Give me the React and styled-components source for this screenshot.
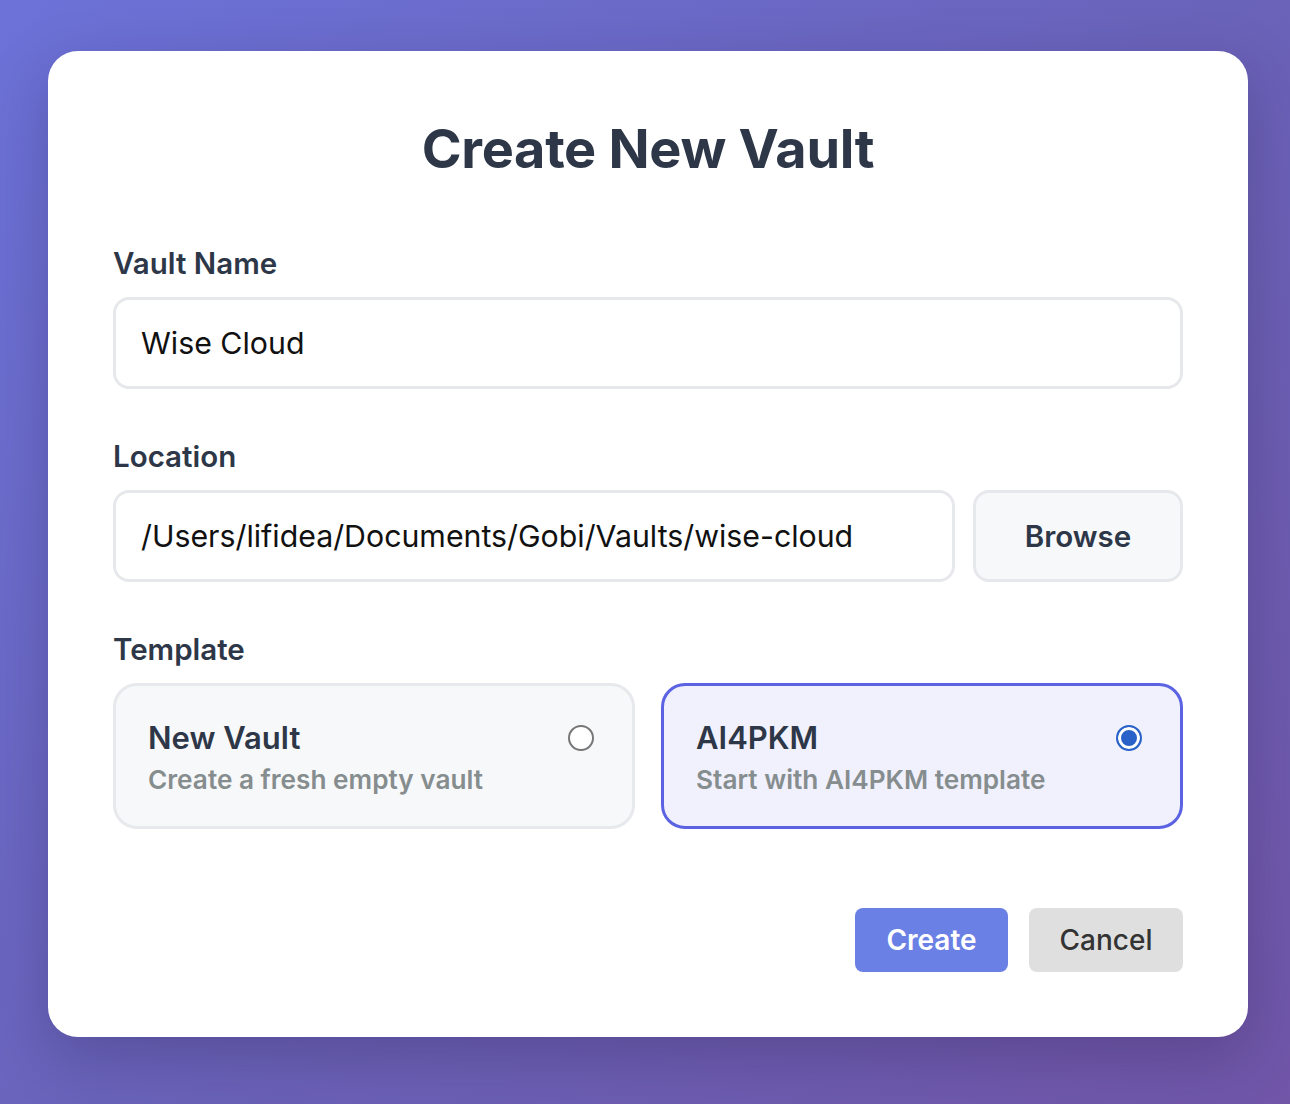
import React, { useState } from "react";
import styled, { createGlobalStyle } from "styled-components";

const GlobalStyle = createGlobalStyle`
  html, body {
    margin: 0;
    padding: 0;
  }
  body {
    font-family: Inter, "Noto Sans", "Liberation Sans", sans-serif;
    -webkit-font-smoothing: antialiased;
  }
`;

const Backdrop = styled.div`
  width: 1290px;
  height: 1104px;
  box-sizing: border-box;
  padding: 51px 42px 67px 48px;
  background: linear-gradient(135deg, #6c72d8 0%, #6a62b8 55%, #7156a8 100%);
  display: flex;
`;

const Modal = styled.div`
  flex: 1;
  background: #fff;
  border-radius: 30px;
  padding: 64px 65px 65px 65px;
  box-shadow: 0 20px 60px rgba(30, 20, 60, 0.25);
  display: flex;
  flex-direction: column;
`;

const Title = styled.h1`
  margin: 0 0 63px;
  text-align: center;
  font-size: 54px;
  line-height: 68px;
  font-weight: 700;
  color: #2d3748;
  letter-spacing: -0.3px;
`;

const Field = styled.div`
  display: flex;
  flex-direction: column;
  gap: 17px;
  margin-bottom: ${(p) => p.$mb ?? 50}px;
`;

const Label = styled.label`
  font-size: 29.5px;
  line-height: 34px;
  font-weight: 600;
  color: #2d3748;
`;

const Row = styled.div`
  display: flex;
  gap: 18px;
`;

const Input = styled.input`
  flex: 1 1 auto;
  width: 100%;
  min-width: 0;
  height: 92px;
  box-sizing: border-box;
  border: 3px solid #e7e8ec;
  border-radius: 16px;
  padding: 0 25px;
  font-family: inherit;
  font-size: 30.3px;
  color: #111;
  background: #fff;
  outline: none;
`;

const BrowseButton = styled.button`
  flex: 0 0 210px;
  height: 92px;
  border: 3px solid #e7e8ec;
  border-radius: 16px;
  background: #f7f8fa;
  font-family: inherit;
  font-size: 29.5px;
  font-weight: 600;
  color: #2d3748;
  cursor: pointer;
`;

const Cards = styled.div`
  display: grid;
  grid-template-columns: 1fr 1fr;
  gap: 26px;
`;

const Card = styled.div`
  height: 146px;
  box-sizing: border-box;
  border: 3px solid ${(p) => (p.$selected ? "#5b63e3" : "#e8e9ec")};
  background: ${(p) => (p.$selected ? "#f0f1fd" : "#f7f8fa")};
  border-radius: 24px;
  padding: 33px 38px 0 32px;
  display: flex;
  justify-content: space-between;
  align-items: flex-start;
  cursor: pointer;
`;

const CardText = styled.div`
  display: flex;
  flex-direction: column;
  gap: 8px;
`;

const CardTitle = styled.div`
  font-size: 31px;
  line-height: 38px;
  font-weight: 600;
  color: #2d3748;
`;

const CardDesc = styled.div`
  font-size: 26.2px;
  line-height: 30px;
  font-weight: 600;
  color: #868d8e;
`;

const Radio = styled.span`
  margin-top: 6px;
  width: 26px;
  height: 26px;
  box-sizing: border-box;
  border-radius: 50%;
  border: 2px solid ${(p) => (p.$checked ? "#2a62c9" : "#777")};
  background: ${(p) => (p.$checked ? "#2a62c9" : "#fff")};
  box-shadow: ${(p) => (p.$checked ? "inset 0 0 0 3px #fff" : "none")};
  flex-shrink: 0;
`;

const Actions = styled.div`
  margin-top: auto;
  display: flex;
  justify-content: flex-end;
  gap: 21px;
`;

const ActionButton = styled.button`
  height: 64px;
  width: ${(p) => (p.$primary ? 153 : 154)}px;
  border: none;
  border-radius: 8px;
  background: ${(p) => (p.$primary ? "#6a80e4" : "#dfdfdf")};
  color: ${(p) => (p.$primary ? "#fff" : "#333")};
  font-family: inherit;
  font-size: 28px;
  font-weight: ${(p) => (p.$primary ? 600 : 500)};
  cursor: pointer;
`;

const templates = [
  { id: "new", title: "New Vault", desc: "Create a fresh empty vault" },
  { id: "ai4pkm", title: "AI4PKM", desc: "Start with AI4PKM template" },
];

export default function App() {
  const [selected, setSelected] = useState("ai4pkm");

  return (
    <>
      <GlobalStyle />
      <Backdrop>
        <Modal>
          <Title>Create New Vault</Title>

          <Field>
            <Label>Vault Name</Label>
            <Input defaultValue="Wise Cloud" />
          </Field>

          <Field>
            <Label>Location</Label>
            <Row>
              <Input defaultValue="/Users/lifidea/Documents/Gobi/Vaults/wise-cloud" />
              <BrowseButton>Browse</BrowseButton>
            </Row>
          </Field>

          <Field $mb={0}>
            <Label>Template</Label>
            <Cards>
              {templates.map((t) => (
                <Card
                  key={t.id}
                  $selected={selected === t.id}
                  onClick={() => setSelected(t.id)}
                >
                  <CardText>
                    <CardTitle>{t.title}</CardTitle>
                    <CardDesc>{t.desc}</CardDesc>
                  </CardText>
                  <Radio $checked={selected === t.id} />
                </Card>
              ))}
            </Cards>
          </Field>

          <Actions>
            <ActionButton $primary>Create</ActionButton>
            <ActionButton>Cancel</ActionButton>
          </Actions>
        </Modal>
      </Backdrop>
    </>
  );
}
